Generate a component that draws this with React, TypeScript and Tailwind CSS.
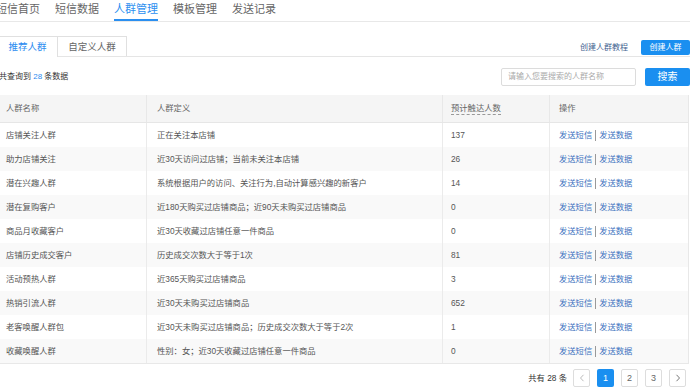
import React from "react";

const rows = [
    { name: "店铺关注人群", def: "正在关注本店铺", count: "137" },
    { name: "助力店铺关注", def: "近30天访问过店铺；当前未关注本店铺", count: "26" },
    { name: "潜在兴趣人群", def: "系统根据用户的访问、关注行为,自动计算感兴趣的新客户", count: "14" },
    { name: "潜在复购客户", def: "近180天购买过店铺商品；近90天未购买过店铺商品", count: "0" },
    { name: "商品月收藏客户", def: "近30天收藏过店铺任意一件商品", count: "0" },
    { name: "店铺历史成交客户", def: "历史成交次数大于等于1次", count: "81" },
    { name: "活动预热人群", def: "近365天购买过店铺商品", count: "3" },
    { name: "热销引流人群", def: "近30天未购买过店铺商品", count: "652" },
    { name: "老客唤醒人群包", def: "近30天未购买过店铺商品；历史成交次数大于等于2次", count: "1" },
    { name: "收藏唤醒人群", def: "性别：女；近30天收藏过店铺任意一件商品", count: "0" },
];

const navItems = ["短信首页", "短信数据", "人群管理", "模板管理", "发送记录"];

export default function App() {
    return (
        <div
            className="w-[700px] h-[392px] overflow-hidden bg-white text-[#555]"
            style={{ fontFamily: '"Liberation Sans", "Noto Sans CJK SC", sans-serif' }}
        >
            <div className="ml-[-3px] w-[693px]">
                {/* top nav */}
                <div className="flex gap-[15px] h-[22px] border-b border-[#e8e8e8]">
                    {navItems.map((item, i) => (
                        <div
                            key={item}
                            className={
                                i === 2
                                    ? "h-[21px] text-[11px] leading-[18px] border-b-2 border-[#2b8ff0] text-[#2b8ff0]"
                                    : i === 0
                                    ? "h-[21px] text-[11px] leading-[18px] border-b-2 border-transparent text-[#666] -ml-[1px]"
                                    : "h-[21px] text-[11px] leading-[18px] border-b-2 border-transparent text-[#666]"
                            }
                        >
                            {item}
                        </div>
                    ))}
                </div>

                {/* sub tabs */}
                <div className="mt-[13px] flex items-end justify-between border-b border-[#e5e5e5] h-[22px]">
                    <div className="flex h-[21px] -mb-px">
                        <div className="w-[61px] h-[21px] border border-b-0 border-[#e0e0e0] bg-white text-[#2d8cf0] text-[9.5px] leading-[20px] text-center">
                            推荐人群
                        </div>
                        <div className="w-[69px] h-[20px] border-t border-r border-[#e0e0e0] bg-white text-[#666] text-[9.5px] leading-[19px] text-center">
                            自定义人群
                        </div>
                    </div>
                    <div className="flex items-center gap-[13px] mb-[1px]">
                        <span className="text-[8px] leading-[15px] text-[#41628f]">创建人群教程</span>
                        <button className="w-[49px] h-[15px] rounded-[2px] bg-[#1a8ff0] text-white text-[8px] leading-[15px]">
                            创建人群
                        </button>
                    </div>
                </div>

                {/* search row */}
                <div className="mt-[11px] flex items-center justify-between h-[18px]">
                    <div className="text-[8px] text-[#333] pl-[2px]">
                        共查询到 <span className="text-[#2d8cf0]">28</span> 条数据
                    </div>
                    <div className="flex gap-[9px]">
                        <div className="w-[135px] h-[18px] border border-[#dcdcdc] rounded-[2px] px-[6px] text-[8px] leading-[16px] text-[#aaa]">
                            请输入您要搜索的人群名称
                        </div>
                        <button className="w-[45px] h-[18px] rounded-[2px] bg-[#1a8ff0] text-white text-[10px] leading-[18px]">
                            搜索
                        </button>
                    </div>
                </div>

                {/* table */}
                <div className="mt-[9px] w-[692px] border-r border-b border-[#e8e8e8] text-[8.3px]">
                    <div className="grid grid-cols-[150px_296px_107px_1fr] h-[28px] bg-[#f5f5f5] border-b border-[#e6e6e6] text-[#666]">
                        <div className="pl-[9px] leading-[27px] border-r border-[#e8e8e8]">人群名称</div>
                        <div className="pl-[10px] leading-[27px] border-r border-[#e8e8e8]">人群定义</div>
                        <div className="pl-[8px] flex items-center border-r border-[#e8e8e8]">
                            <span className="border-b border-dashed border-[#999] leading-[11px]">预计触达人数</span>
                        </div>
                        <div className="pl-[9px] leading-[27px]">操作</div>
                    </div>
                    {rows.map((r, i) => (
                        <div
                            key={r.name}
                            className={
                                i % 2 === 1
                                    ? "grid grid-cols-[150px_296px_107px_1fr] h-[24px] bg-[#f9f9f9] leading-[24px]"
                                    : "grid grid-cols-[150px_296px_107px_1fr] h-[24px] bg-white leading-[24px]"
                            }
                        >
                            <div className="pl-[9px] border-r border-[#ebebeb]">{r.name}</div>
                            <div className="pl-[10px] border-r border-[#ebebeb]">{r.def}</div>
                            <div className="pl-[8px] border-r border-[#ebebeb]">{r.count}</div>
                            <div className="pl-[9px] flex items-center text-[#3d72c0]">
                                <span>发送短信</span>
                                <span className="mx-[3px] w-px h-[11px] bg-[#999]"></span>
                                <span>发送数据</span>
                            </div>
                        </div>
                    ))}
                </div>

                {/* pagination */}
                <div className="mt-[5px] flex items-center justify-end gap-[6px] pr-[4px]">
                    <span className="text-[8.3px] text-[#333]">共有 28 条</span>
                    <div className="flex gap-[7px]">
                        <div className="w-[17px] h-[18px] border border-[#ddd] rounded-[2px] flex items-center justify-center">
                            <svg width="6" height="8" viewBox="0 0 6 8" fill="none">
                                <path d="M4.5 0.8 L1.5 4 L4.5 7.2" stroke="#bbb" strokeWidth="1" />
                            </svg>
                        </div>
                        <div className="w-[17px] h-[18px] rounded-[2px] bg-[#1a8ff0] text-white text-[9px] leading-[18px] text-center">1</div>
                        <div className="w-[17px] h-[18px] border border-[#ddd] rounded-[2px] text-[#666] text-[9px] leading-[16px] text-center">2</div>
                        <div className="w-[17px] h-[18px] border border-[#ddd] rounded-[2px] text-[#666] text-[9px] leading-[16px] text-center">3</div>
                        <div className="w-[17px] h-[18px] border border-[#ddd] rounded-[2px] flex items-center justify-center">
                            <svg width="6" height="8" viewBox="0 0 6 8" fill="none">
                                <path d="M1.5 0.8 L4.5 4 L1.5 7.2" stroke="#777" strokeWidth="1" />
                            </svg>
                        </div>
                    </div>
                </div>
            </div>
        </div>
    );
}
